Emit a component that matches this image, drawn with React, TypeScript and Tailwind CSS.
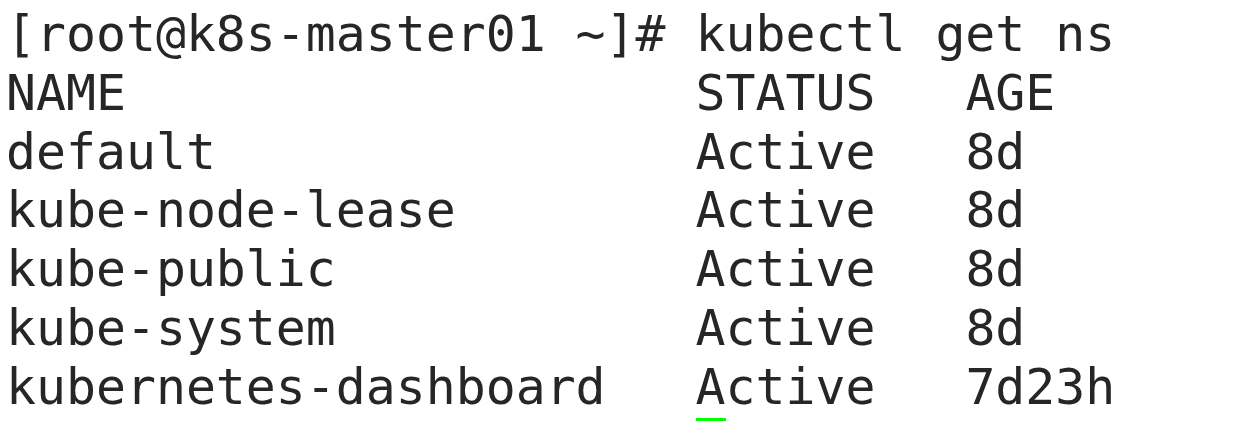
import React from 'react';

const rows = [
  ['NAME', 'STATUS', 'AGE'],
  ['default', 'Active', '8d'],
  ['kube-node-lease', 'Active', '8d'],
  ['kube-public', 'Active', '8d'],
  ['kube-system', 'Active', '8d'],
  ['kubernetes-dashboard', 'Active', '7d23h'],
];

const pad = (s: string, n: number) => s + ' '.repeat(Math.max(0, n - s.length));

export default function App() {
  return (
    <div className="h-[421px] w-[1250px] overflow-hidden bg-white pl-[6px] pt-[5px] text-[#262626] font-['DejaVu_Sans_Mono',monospace] text-[49.8px] leading-[58.8px] whitespace-pre">
      <div>[root@k8s-master01 ~]# kubectl get ns</div>
      {rows.map((r, i) => {
        const last = i === rows.length - 1;
        return (
          <div key={r[0]}>
            {pad(r[0], 23)}
            {last ? (
              <>
                <span className="relative">
                  A
                  <span className="absolute left-0 right-0 -bottom-[5px] h-[3px] bg-[#00ff00]" />
                </span>
                {pad(r[1].slice(1), 8)}
              </>
            ) : (
              pad(r[1], 9)
            )}
            {r[2]}
          </div>
        );
      })}
    </div>
  );
}
